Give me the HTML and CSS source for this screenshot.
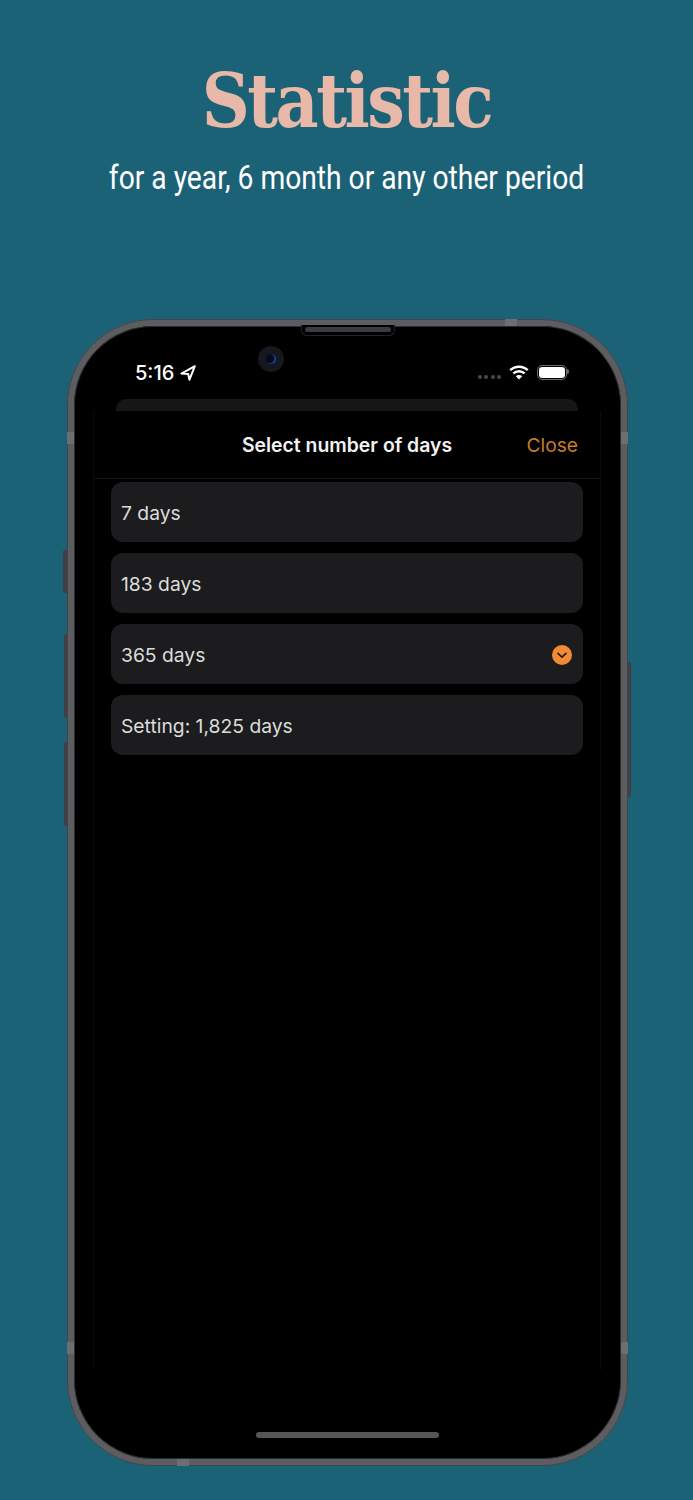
FILE: index.html
```html
<!DOCTYPE html>
<html lang="en">
<head>
    <meta charset="UTF-8">
    <meta name="viewport" content="width=device-width, initial-scale=1.0">
    <title>Statistic</title>
    <link rel="stylesheet" href="styles.css">
</head>
<body>
    <!-- Heading -->
    <header class="promo">
        <h1>Statistic</h1>
        <p>for a year, 6 month or any other period</p>
    </header>

    <!-- Phone -->
    <div class="phone">
        <span class="side-btn silent"></span>
        <span class="side-btn vol-up"></span>
        <span class="side-btn vol-down"></span>
        <span class="side-btn power"></span>
        <span class="band band-top"></span>
        <span class="band band-bottom"></span>
        <span class="band band-left-a"></span>
        <span class="band band-left-b"></span>
        <span class="band band-right-a"></span>
        <span class="band band-right-b"></span>
        <span class="speaker"></span>
        <span class="camera"></span>

        <div class="status-bar">
            <div class="status-left">
                <span class="time">5:16</span>
                <svg class="location" width="16" height="16" viewBox="0 0 16 16">
                    <path d="M14.8 1.2 1.4 8.6 8.2 9 9.4 14.8Z" fill="none" stroke="#fff" stroke-width="2" stroke-linejoin="round"/>
                </svg>
            </div>
            <div class="status-right">
                <span class="signal"><i></i><i></i><i></i><i></i></span>
                <svg width="20" height="15" viewBox="0 0 20 15">
                    <path d="M1.2 5.2a12.8 12.8 0 0 1 17.6 0" fill="none" stroke="#fff" stroke-width="2.4"/>
                    <path d="M4.4 8.4a8.2 8.2 0 0 1 11.2 0" fill="none" stroke="#fff" stroke-width="2.4"/>
                    <path d="M10 14.6 6.8 11.3a4.6 4.6 0 0 1 6.4 0Z" fill="#fff"/>
                </svg>
                <span class="battery"><span class="battery-level"></span></span>
            </div>
        </div>

        <div class="peek-card"></div>

        <div class="sheet">
            <div class="sheet-header">
                <span class="sheet-title">Select number of days</span>
                <span class="close">Close</span>
            </div>
            <ul class="day-list">
                <li>7 days</li>
                <li>183 days</li>
                <li>
                    365 days
                    <svg width="20" height="20" viewBox="0 0 20 20">
                        <circle cx="10" cy="10" r="10" fill="#f08a33"/>
                        <path d="M6 8.4 10 12.2 14 8.4" fill="none" stroke="#1c1c1e" stroke-width="1.6" stroke-linecap="round" stroke-linejoin="round"/>
                    </svg>
                </li>
                <li>Setting: 1,825 days</li>
            </ul>
        </div>

        <span class="home-bar"></span>
    </div>
</body>
</html>
```

FILE: styles.css
```css
* {
    box-sizing: border-box;
}
body {
    margin: 0;
    padding: 0;
    height: 1500px;
    overflow: hidden;
    background-color: #1c6277;
    font-family: Inter, "Liberation Sans", sans-serif;
}
.promo {
    height: 319px;
    padding-top: 56px;
    text-align: center;
}
.promo h1 {
    margin: 0;
    height: 90px;
    font-family: "DejaVu Serif", serif;
    font-size: 74px;
    line-height: 90px;
    font-weight: 700;
    font-stretch: condensed;
    letter-spacing: -2.5px;
    color: #e8b8a8;
}
.promo p {
    margin: 10px 0 0;
    font-family: Roboto, sans-serif;
    font-size: 33px;
    line-height: 44px;
    color: #fff;
    transform: scaleX(0.855);
    white-space: nowrap;
}
.phone {
    position: relative;
    display: flex;
    flex-direction: column;
    width: 561px;
    height: 1147px;
    margin-left: 67px;
    background-color: #000;
    border: 7px solid #5c5d61;
    border-radius: 86px;
    box-shadow: inset 0 0 0 1px #2c2c2e;
}
/* darker outer edge of the rim */
.phone::before {
    content: "";
    position: absolute;
    top: -7px;
    right: -7px;
    bottom: -7px;
    left: -7px;
    border: 1px solid #434448;
    border-radius: 86px;
}
.side-btn {
    position: absolute;
    width: 4px;
    background-color: #3f4044;
    border-radius: 2px 0 0 2px;
}
.silent {
    left: -11px;
    top: 224px;
    height: 43px;
}
.vol-up {
    left: -10px;
    top: 308px;
    height: 84px;
    width: 3px;
}
.vol-down {
    left: -10px;
    top: 416px;
    height: 84px;
    width: 3px;
}
.power {
    right: -10px;
    top: 336px;
    height: 135px;
    width: 3px;
    border-radius: 0 2px 2px 0;
}
.band {
    position: absolute;
    z-index: 1;
    background-color: #6d6e72;
}
.band-top {
    top: -7px;
    left: 431px;
    width: 12px;
    height: 7px;
}
.band-bottom {
    bottom: -7px;
    left: 103px;
    width: 12px;
    height: 7px;
}
.band-left-a {
    left: -7px;
    top: 106px;
    width: 7px;
    height: 12px;
}
.band-left-b {
    left: -7px;
    top: 1016px;
    width: 7px;
    height: 12px;
}
.band-right-a {
    right: -7px;
    top: 106px;
    width: 7px;
    height: 12px;
}
.band-right-b {
    right: -7px;
    top: 1016px;
    width: 7px;
    height: 12px;
}
.speaker {
    position: absolute;
    top: -1px;
    left: 227px;
    width: 94px;
    height: 11px;
    background-color: #000;
    border: 1px solid #242426;
    border-top: none;
    border-radius: 0 0 6px 6px;
}
.speaker::after {
    content: "";
    position: absolute;
    top: 2px;
    left: 3px;
    right: 3px;
    height: 5px;
    background-color: #3c3c3e;
    border-radius: 3px;
}
.camera {
    position: absolute;
    top: 20px;
    left: 184px;
    width: 26px;
    height: 26px;
    background-color: #16181f;
    border-radius: 50%;
}
.camera::after {
    content: "";
    position: absolute;
    top: 8px;
    left: 8px;
    width: 10px;
    height: 10px;
    background: radial-gradient(circle at 35% 45%, #050a1c 45%, #1d46b0 70%);
    border-radius: 50%;
}
.status-bar {
    display: flex;
    justify-content: space-between;
    align-items: center;
    flex-shrink: 0;
    height: 73px;
    padding: 20px 54px 0 61px;
    color: #fff;
}
.status-left {
    display: flex;
    align-items: center;
    gap: 6px;
}
.time {
    font-size: 20px;
    font-weight: 500;
}
.status-right {
    display: flex;
    align-items: center;
    gap: 8px;
}
.signal {
    display: flex;
    gap: 2.5px;
    align-self: flex-end;
    margin-bottom: 1px;
}
.signal i {
    width: 4px;
    height: 4px;
    background-color: #4a4a4c;
    border-radius: 50%;
}
.battery {
    position: relative;
    width: 30px;
    height: 15px;
    padding: 1px;
    border: 1px solid #6a6a6c;
    border-radius: 5px;
}
.battery::after {
    content: "";
    position: absolute;
    top: 3px;
    right: -3px;
    width: 2px;
    height: 5px;
    background-color: #6a6a6c;
    border-radius: 0 2px 2px 0;
}
.battery-level {
    display: block;
    height: 100%;
    background-color: #fff;
    border-radius: 3px;
}
.peek-card {
    flex-shrink: 0;
    height: 12px;
    margin: 0 43px 0 42px;
    background-color: #161618;
    border-radius: 10px 10px 0 0;
}
.sheet {
    height: 959px;
    margin: 0 20px 0 19px;
    border-left: 1px solid #0a0a0a;
    border-right: 1px solid #0a0a0a;
}
.sheet-header {
    position: relative;
    display: flex;
    justify-content: center;
    align-items: center;
    height: 68px;
    border-bottom: 1px solid #141414;
}
.sheet-title {
    font-size: 19.4px;
    font-weight: 600;
    color: #f2f2f2;
}
.close {
    position: absolute;
    right: 22px;
    font-size: 19.2px;
    color: #c97b2c;
}
.day-list {
    display: flex;
    flex-direction: column;
    gap: 11px;
    margin: 3px 17px 0;
    padding: 0;
    list-style: none;
}
.day-list li {
    display: flex;
    justify-content: space-between;
    align-items: center;
    height: 60px;
    padding: 1px 11px 0 10px;
    font-size: 19.3px;
    color: #dcdcdc;
    background-color: #1c1c1e;
    border-radius: 12px;
}
.home-bar {
    position: absolute;
    bottom: 21px;
    left: 182px;
    width: 183px;
    height: 6px;
    background-color: #555658;
    border-radius: 3px;
}
```
